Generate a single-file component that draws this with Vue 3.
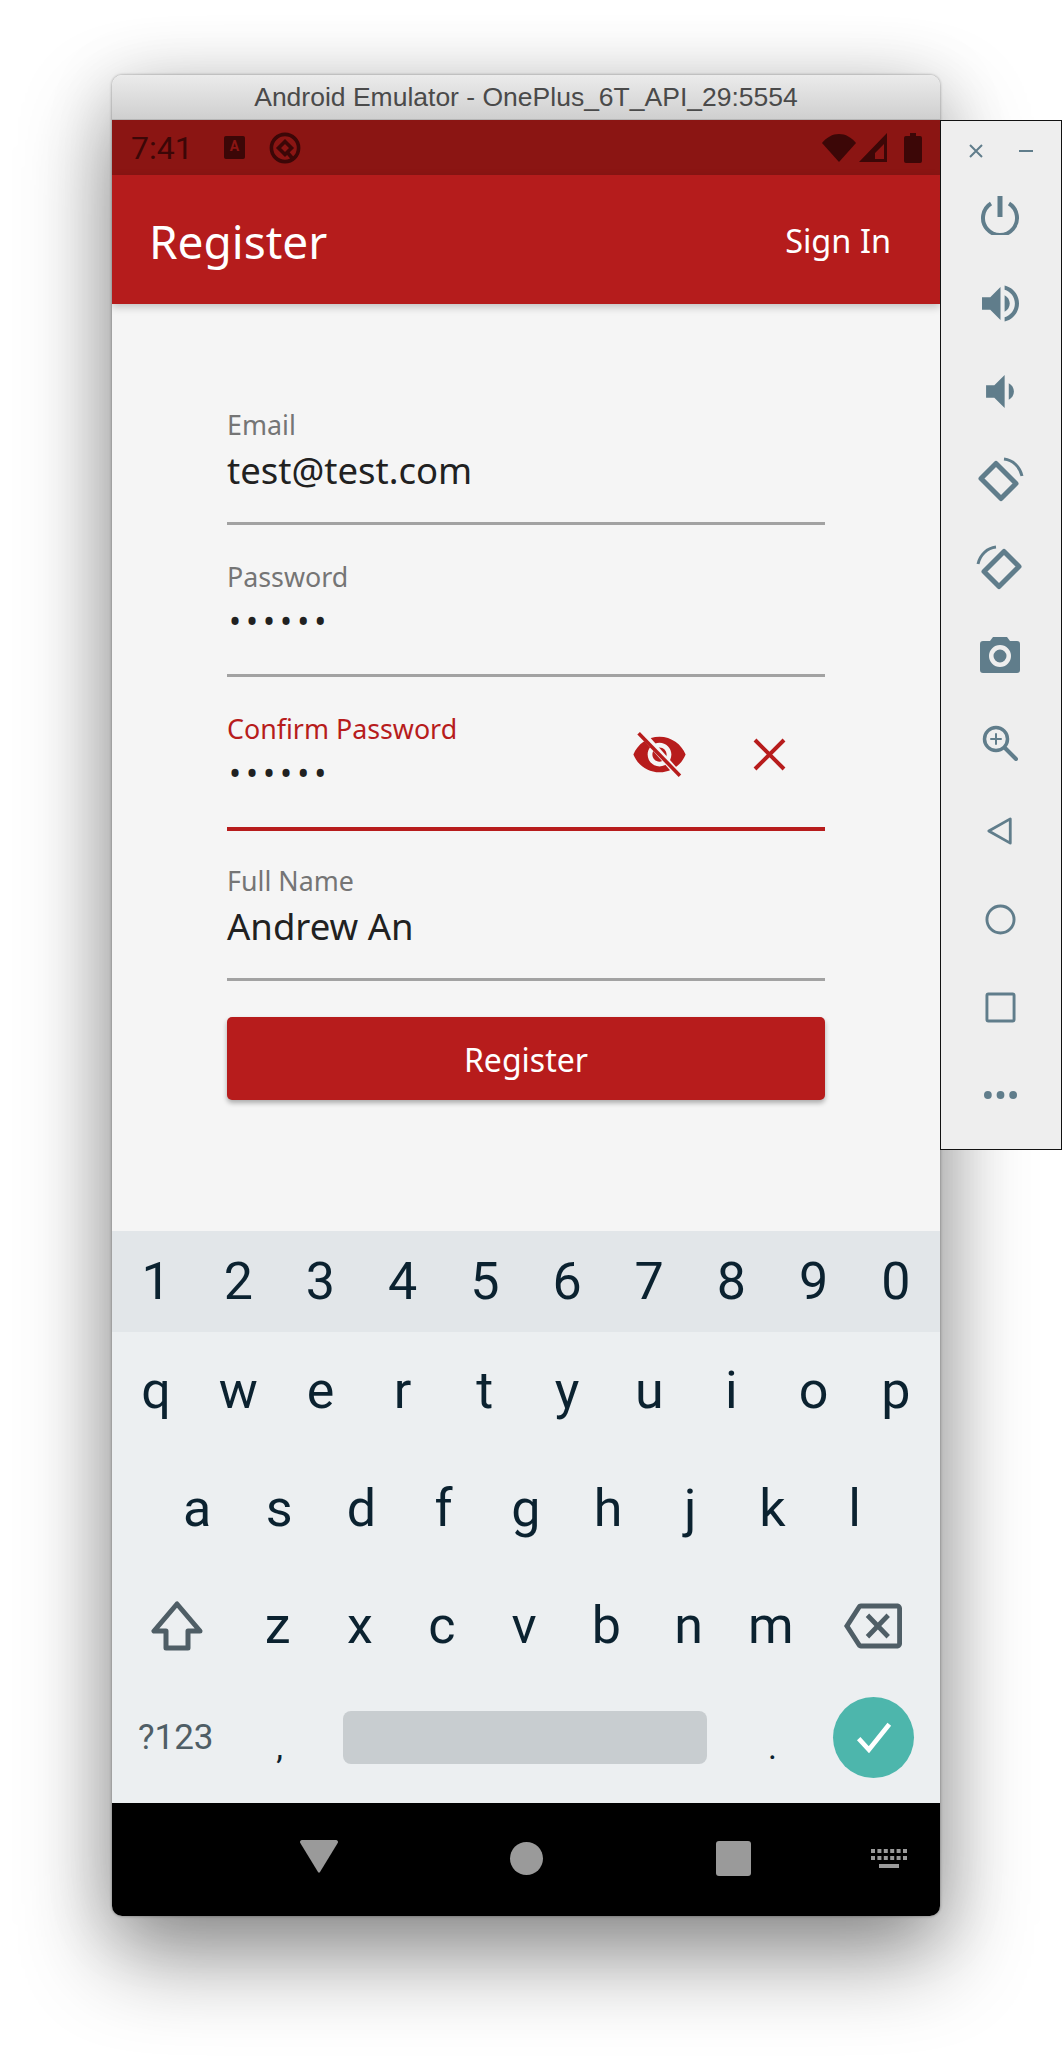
<script setup>
const digits = '1234567890'.split('')
const row1 = 'qwertyuiop'.split('')
const row2 = 'asdfghjkl'.split('')
const row3 = 'zxcvbnm'.split('')
const fields = [
  { label: 'Email', value: 'test@test.com' },
  { label: 'Password', value: '••••••', secret: true },
  { label: 'Confirm Password', value: '••••••', secret: true, focused: true },
  { label: 'Full Name', value: 'Andrew An' }
]
</script>

<template>
  <div class="page">
    <div class="window">
      <div class="titlebar">Android Emulator - OnePlus_6T_API_29:5554</div>
      <div class="status">
        <span class="time">7:41</span>
        <span class="a-icon">A</span>
        <svg class="q-icon" viewBox="0 0 32 32" fill="none" stroke="#3c0707" stroke-width="3.6">
          <circle cx="16" cy="16" r="13.6" />
          <path d="M16 9.500 9.500 16l6.500 6.500 6.500-6.500zM18 20l6 7" />
        </svg>
        <span class="spacer"></span>
        <svg class="wifi" viewBox="0 0 34 28"><path d="M0 9C4.500 3.400 10.500 0 17 0s12.500 3.400 17 9L17 28z" fill="#3c0707" /></svg>
        <svg class="signal" viewBox="0 0 28 29"><path fill-rule="evenodd" d="M28 0v29H0zM25 11l-9 9v6h9z" fill="#3c0707" /></svg>
        <svg class="battery" viewBox="0 0 18 30"><path d="M6 0h6v3h4a2 2 0 0 1 2 2v23a2 2 0 0 1-2 2H2a2 2 0 0 1-2-2V5a2 2 0 0 1 2-2h4z" fill="#3c0707" /></svg>
      </div>
      <header class="appbar">
        <span class="appbar-title">Register</span>
        <span class="appbar-action">Sign In</span>
      </header>
      <main class="content">
        <div class="form">
          <div v-for="f in fields" :key="f.label" class="field" :class="{ focused: f.focused }">
            <div class="label">{{ f.label }}</div>
            <div class="value" :class="{ secret: f.secret }">{{ f.value }}</div>
            <div v-if="f.focused" class="field-icons">
              <svg class="eye" viewBox="0 0 24 24">
                <path fill="#b71c1c" d="M12 4.500C7 4.500 2.730 7.610 1 12c1.730 4.390 6 7.500 11 7.500s9.270-3.110 11-7.500c-1.730-4.390-6-7.500-11-7.500zM12 17c-2.760 0-5-2.240-5-5s2.240-5 5-5 5 2.240 5 5-2.240 5-5 5zm0-8c-1.660 0-3 1.340-3 3s1.340 3 3 3 3-1.340 3-3-1.340-3-3-3z" />
                <path d="M5 3.500 20 20.500" stroke="#f5f5f5" stroke-width="2.800" />
                <path d="M3.200 3.100 20.600 20.900" stroke="#b71c1c" stroke-width="1.500" />
              </svg>
              <svg class="close" viewBox="0 0 33 33" fill="none" stroke="#b71c1c" stroke-width="4"><path d="M2 2l29 29M31 2 2 31" /></svg>
            </div>
          </div>
          <button class="submit">Register</button>
        </div>
      </main>
      <section class="keyboard">
        <div class="numbers">
          <span v-for="k in digits" :key="k" class="key">{{ k }}</span>
        </div>
        <div class="kb-row">
          <span v-for="k in row1" :key="k" class="key">{{ k }}</span>
        </div>
        <div class="kb-row indented">
          <span v-for="k in row2" :key="k" class="key">{{ k }}</span>
        </div>
        <div class="kb-row">
          <span class="wide-key">
            <svg class="shift" viewBox="0 0 52 50" fill="none" stroke="#4f5e66" stroke-width="5" stroke-linejoin="round"><path d="M26 3 3 30h12v17h22V30h12z" /></svg>
          </span>
          <span v-for="k in row3" :key="k" class="key">{{ k }}</span>
          <span class="wide-key">
            <svg class="backspace" viewBox="0 0 24 24" preserveAspectRatio="none"><path fill="#4f5e66" d="M22 3H7c-.69 0-1.230.35-1.590.88L0 12l5.410 8.110c.36.53.9.89 1.590.89h15c1.100 0 2-.9 2-2V5c0-1.100-.9-2-2-2zm0 16H7.070L2.400 12l4.660-7H22v14zm-11.590-2L14 13.410 17.590 17 19 15.590 15.410 12 19 8.410 17.590 7 14 10.590 10.410 7 9 8.410 12.590 12 9 15.590z" /></svg>
          </span>
        </div>
        <div class="kb-row bottom">
          <span class="wide-key sym">?123</span>
          <span class="key punct comma">,</span>
          <span class="space-cell"><span class="spacebar"></span></span>
          <span class="key punct period">.</span>
          <span class="wide-key">
            <span class="done">
              <svg viewBox="0 0 44 40" fill="none" stroke="#fff" stroke-width="5.500"><path d="M4 22 16 35 40 5" /></svg>
            </span>
          </span>
        </div>
      </section>
      <nav class="navbar">
        <svg class="nav-back" viewBox="0 0 38 33"><path d="M2 0h34a2 2 0 0 1 1.700 3L20 32a1.200 1.200 0 0 1-2 0L.3 3A2 2 0 0 1 2 0z" fill="#9a9a9a" /></svg>
        <span class="nav-home"></span>
        <span class="nav-recent"></span>
        <svg class="nav-kb" viewBox="0 0 36 20" fill="#9a9a9a">
          <path d="M0 0h4v4H0zM6.400 0h4v4h-4zM12.800 0h4v4h-4zM19.200 0h4v4h-4zM25.600 0h4v4h-4zM32 0h4v4h-4zM0 7h4v4H0zM6.400 7h4v4h-4zM12.800 7h4v4h-4zM19.200 7h4v4h-4zM25.600 7h4v4h-4zM32 7h4v4h-4zM8 15h20v4H8z" />
        </svg>
      </nav>
    </div>

    <aside class="panel">
      <div class="panel-top">
        <svg class="win-x" viewBox="0 0 14 14" fill="none" stroke="#607d8b" stroke-width="2"><path d="M1 1l12 12M13 1 1 13" /></svg>
        <span class="win-min"></span>
      </div>
      <div class="tools">
        <svg class="tool" viewBox="0 0 40 40" fill="none" stroke="#607d8b" stroke-width="4"><path d="M11 8.500a17 17 0 1 0 18 0" /><path d="M20 1v21" stroke-width="5" /></svg>
        <svg class="tool vol" viewBox="3 3 18 18"><path fill="#607d8b" d="M3 9v6h4l5 5V4L7 9H3zm13.500 3c0-1.770-1.020-3.290-2.500-4.030v8.050c1.480-.73 2.500-2.250 2.500-4.020zM14 3.230v2.060c2.890.86 5 3.540 5 6.710s-2.110 5.850-5 6.710v2.060c4.010-.91 7-4.490 7-8.770s-2.990-7.860-7-8.770z" /></svg>
        <svg class="tool vol-down" viewBox="5 4 13.500 16"><path fill="#607d8b" d="M18.500 12c0-1.770-1.020-3.290-2.500-4.030v8.050c1.480-.73 2.500-2.250 2.500-4.020zM5 9v6h4l5 5V4L9 9H5z" /></svg>
        <svg class="tool rot" viewBox="0 0 48 48" fill="none" stroke="#607d8b">
          <path d="M20 8.500 5 23.500 25 43.500 40 28.500z" stroke-width="5" stroke-linejoin="round" />
          <path d="M28 4C37 5 44 12 46 21" stroke-width="3" />
        </svg>
        <svg class="tool rot" viewBox="0 0 48 48" fill="none" stroke="#607d8b">
          <path d="M28 8.500 43 23.500 23 43.500 8 28.500z" stroke-width="5" stroke-linejoin="round" />
          <path d="M20 4C11 5 4 12 2 21" stroke-width="3" />
        </svg>
        <svg class="tool" viewBox="0 0 40 36"><path fill-rule="evenodd" fill="#607d8b" d="M13 0h14l3 4h7a3 3 0 0 1 3 3v26a3 3 0 0 1-3 3H3a3 3 0 0 1-3-3V7a3 3 0 0 1 3-3h7zM20 8a11 11 0 1 0 0 22 11 11 0 0 0 0-22zm0 4.500a6.500 6.500 0 1 1 0 13 6.500 6.500 0 0 1 0-13z" /></svg>
        <svg class="tool zoom" viewBox="0 0 36 36" fill="none" stroke="#607d8b" stroke-width="3.500" stroke-linecap="round"><circle cx="14" cy="14" r="11.500" /><path d="M23 23l11 11" stroke-width="4" /><path d="M14 9v10M9 14h10" stroke-width="2" /></svg>
        <svg class="tool back" viewBox="0 0 30 32" fill="none" stroke="#607d8b" stroke-width="3" stroke-linejoin="round"><path d="M26 3v26L3 16z" /></svg>
        <svg class="tool shape" viewBox="0 0 32 32" fill="none" stroke="#607d8b" stroke-width="3"><circle cx="16" cy="16" r="14" /></svg>
        <svg class="tool shape" viewBox="0 0 32 32" fill="none" stroke="#607d8b" stroke-width="3" stroke-linejoin="round"><rect x="2" y="2" width="28" height="28" rx="1.500" /></svg>
        <svg class="tool dots" viewBox="0 0 34 8" fill="#607d8b"><circle cx="4" cy="4" r="4" /><circle cx="17" cy="4" r="4" /><circle cx="30" cy="4" r="4" /></svg>
      </div>
    </aside>
  </div>
</template>

<style scoped>
.page {
  width: 1062px;
  height: 2064px;
  overflow: hidden;
  background: #fff;
  display: flex;
  align-items: flex-start;
  padding: 75px 0 0 112px;
  box-sizing: border-box;
  font-family: "Noto Sans", sans-serif;
}
.window {
  width: 828px;
  height: 1841px;
  display: flex;
  flex-direction: column;
  border-radius: 10px;
  overflow: hidden;
  flex: none;
  box-shadow: 0 0 3px rgba(0, 0, 0, 0.4), 0 40px 90px rgba(0, 0, 0, 0.42), 0 10px 70px rgba(0, 0, 0, 0.14);
}
.titlebar {
  height: 45px;
  flex: none;
  box-sizing: border-box;
  background: linear-gradient(#ebebeb, #cfcfcf);
  border-bottom: 1px solid #b5b5b5;
  color: #4a4a4a;
  font: 26.500px/44px "Liberation Sans", Arial, sans-serif;
  text-align: center;
}
.status {
  height: 55px;
  flex: none;
  background: #8b1513;
  display: flex;
  align-items: center;
  padding: 0 18px 0 19px;
  color: #3c0707;
}
.time {
  font: 32px/1 Roboto, sans-serif;
  width: 93px;
}
.a-icon {
  width: 21px;
  height: 23px;
  background: #3c0707;
  color: #8b1513;
  border-radius: 2px;
  font: 700 14px/21px Roboto, sans-serif;
  text-align: center;
  margin-right: 24px;
}
.q-icon { width: 32px; height: 32px; }
.spacer { flex: 1; }
.wifi { width: 34px; height: 28px; }
.signal { width: 28px; height: 29px; margin-left: 3px; }
.battery { width: 18px; height: 30px; margin-left: 17px; }
.appbar {
  height: 129px;
  flex: none;
  background: #b51c1c;
  color: #fff;
  display: flex;
  align-items: center;
  justify-content: space-between;
  box-sizing: border-box;
  padding: 2px 49px 0 37px;
  box-shadow: 0 3px 8px rgba(0, 0, 0, 0.22);
  z-index: 1;
}
.appbar-title { font-size: 46px; }
.appbar-action { font-size: 32.500px; }
.content {
  flex: none;
  height: 927px;
  background: #f5f5f5;
}
.form {
  padding: 69px 115px 0;
  display: flex;
  flex-direction: column;
}
.field {
  position: relative;
  height: 152px;
  box-sizing: border-box;
  padding-top: 36px;
  border-bottom: 3px solid #a2a2a2;
}
.field.focused { border-bottom: 4px solid #b71c1c; margin-bottom: -2px; height: 154px; }
.label {
  color: #757575;
  font-size: 26.800px;
  line-height: 32px;
}
.focused .label { color: #b71c1c; }
.value {
  color: #212121;
  font-size: 36.500px;
  line-height: 48px;
  margin-top: 5px;
}
.value.secret {
  font-size: 32px;
  letter-spacing: 5px;
  margin-top: 4px;
  padding-left: 2px;
}
.field-icons {
  position: absolute;
  top: 49px;
  left: 404px;
  display: flex;
  align-items: center;
  gap: 65px;
}
.eye { width: 57px; height: 57px; }
.close { width: 33px; height: 33px; }
.submit {
  margin-top: 36px;
  height: 83px;
  border: 0;
  border-radius: 5px;
  background: #b71c1c;
  color: #fff;
  font-family: inherit;
  font-size: 32px;
  padding: 2px 0 0;
  box-shadow: 0 3px 5px rgba(0, 0, 0, 0.3);
}
.keyboard {
  height: 572px;
  flex: none;
  background: #eceff1;
  color: #0b2230;
  font-family: Roboto, sans-serif;
  display: flex;
  flex-direction: column;
}
.numbers {
  height: 101px;
  flex: none;
  background: #e2e6e9;
  display: flex;
  align-items: center;
  padding: 0 3px;
}
.kb-row {
  flex: 1;
  display: flex;
  align-items: center;
  padding: 0 3px;
}
.bottom { position: relative; top: -7px; }
.indented { padding: 0 44px; }
.key {
  width: 82.200px;
  flex: none;
  text-align: center;
  font-size: 52px;
  line-height: 60px;
}
.wide-key {
  width: 121.500px;
  flex: none;
  display: flex;
  justify-content: center;
  align-items: center;
}
.shift { width: 52px; height: 50px; margin-left: 2px; }
.backspace { width: 58px; height: 60px; }
.sym {
  color: #4f5e66;
  font-size: 35px;
}
.punct { font-size: 34px; padding-top: 20px; }
.comma { text-indent: 4px; }
.period { text-indent: -4px; }
.space-cell {
  flex: 1;
  padding: 0 26px 0 24px;
}
.spacebar {
  display: block;
  height: 53px;
  background: #c8cdd0;
  border-radius: 8px;
}
.done {
  width: 81px;
  height: 81px;
  border-radius: 50%;
  background: #4db6ac;
  display: flex;
  align-items: center;
  justify-content: center;
  margin-right: 5px;
}
.done svg { width: 42px; height: 34px; }
.navbar {
  flex: none;
  height: 113px;
  background: #000;
  position: relative;
}
.nav-back { position: absolute; left: 188px; top: 37px; width: 38px; height: 33px; }
.nav-home { position: absolute; left: 398px; top: 39px; width: 33px; height: 33px; border-radius: 50%; background: #9a9a9a; }
.nav-recent { position: absolute; left: 604px; top: 38px; width: 35px; height: 35px; border-radius: 3px; background: #9a9a9a; }
.nav-kb { position: absolute; left: 759px; top: 46px; width: 36px; height: 20px; }
.panel {
  width: 122px;
  height: 1030px;
  flex: none;
  margin-top: 45px;
  box-sizing: border-box;
  border: 1px solid #111;
  background: #eeeeee;
  position: relative;
  z-index: 2;
  display: flex;
  flex-direction: column;
  align-items: center;
}
.panel-top {
  height: 59px;
  flex: none;
  width: 100%;
  box-sizing: border-box;
  display: flex;
  align-items: center;
  justify-content: space-between;
  padding: 0 28px;
}
.win-x { width: 14px; height: 14px; }
.win-min { width: 14px; height: 2px; background: #607d8b; }
.tools {
  display: grid;
  grid-auto-rows: 88px;
  justify-items: center;
  align-items: center;
  margin: -9px 2px 0 0;
}
.tool { width: 40px; height: 40px; display: block; }
.vol { width: 37px; height: 37px; }
.vol-down { width: 28px; height: 33px; }
.rot { width: 48px; height: 48px; }
.zoom { width: 36px; height: 36px; }
.back { width: 28px; height: 30px; }
.shape { width: 31px; height: 31px; }
.dots { width: 33px; height: 8px; }
</style>

<style>
html, body { margin: 0; background: #fff; }
</style>
